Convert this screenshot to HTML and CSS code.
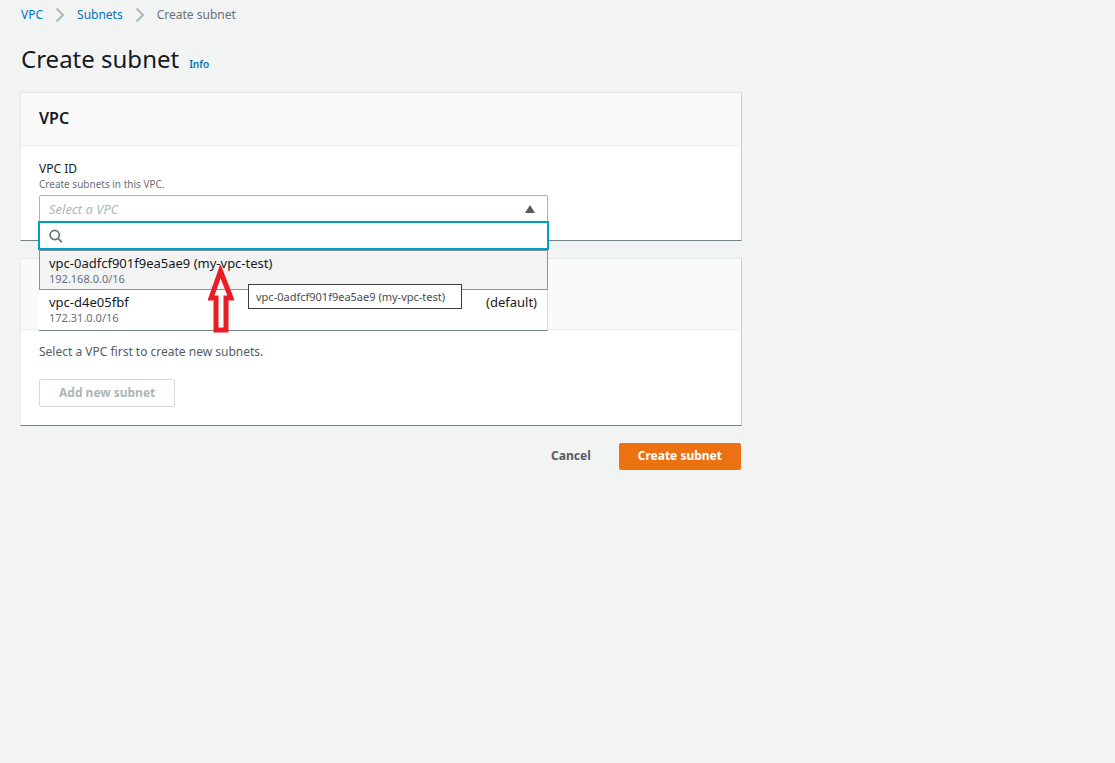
FILE: index.html
```html
<!DOCTYPE html>
<html lang="en">
<head>
<meta charset="utf-8">
<meta name="viewport" content="width=device-width, initial-scale=1">
<title>Create subnet</title>
<link rel="stylesheet" href="styles.css">
</head>
<body>
<div class="page">
  <nav class="breadcrumbs" aria-label="Breadcrumbs">
    <a href="#vpc">VPC</a>
    <svg class="chevron" viewBox="0 0 10 16" aria-hidden="true"><path d="M1.500 1.500 8 8l-6.500 6.500"/></svg>
    <a href="#subnets">Subnets</a>
    <svg class="chevron" viewBox="0 0 10 16" aria-hidden="true"><path d="M1.500 1.500 8 8l-6.500 6.500"/></svg>
    <span>Create subnet</span>
  </nav>

  <header class="title-row">
    <h1 class="title">Create subnet</h1>
    <a class="info" href="#info">Info</a>
  </header>

  <main class="content">
    <section class="card">
      <div class="card-header"><h2 class="card-title">VPC</h2></div>
      <div class="card-body vpc-body">
        <label class="label" for="vpc-id">VPC ID</label>
        <p class="hint">Create subnets in this VPC.</p>
        <div class="picker">
          <select class="select" id="vpc-id">
            <option>Select a VPC</option>
          </select>
          <svg class="caret" viewBox="0 0 10 8" aria-hidden="true"><path d="M5 0 10 8H0z"/></svg>
          <div class="dropdown">
            <div class="search">
              <svg class="search-icon" viewBox="0 0 14 14" aria-hidden="true"><circle cx="5.700" cy="6" r="4.600"/><path d="m9 9.300 3.800 3.800"/></svg>
              <input class="search-input" type="text" aria-label="Search VPCs">
            </div>
            <ul class="options" role="listbox" aria-label="VPCs">
              <li class="option highlighted" role="option" aria-selected="false">
                <div class="option-name">vpc-0adfcf901f9ea5ae9 (my-vpc-test)</div>
                <div class="option-cidr">192.168.0.0/16</div>
              </li>
              <li class="option" role="option" aria-selected="false">
                <div class="option-name"><span>vpc-d4e05fbf</span><span>(default)</span></div>
                <div class="option-cidr">172.31.0.0/16</div>
              </li>
            </ul>
            <div class="tooltip" role="tooltip">vpc-0adfcf901f9ea5ae9 (my-vpc-test)</div>
            <svg class="pointer" viewBox="0 0 26 68" aria-hidden="true"><path d="M12.500 6 3 33h5v32h10V33h5z"/></svg>
          </div>
        </div>
      </div>
    </section>

    <section class="card">
      <div class="card-header settings-header"></div>
      <div class="card-body settings-body">
        <p class="message">Select a VPC first to create new subnets.</p>
        <button class="button outline" type="button" disabled>Add new subnet</button>
      </div>
    </section>

    <div class="actions">
      <button class="button link" type="button">Cancel</button>
      <button class="button primary" type="submit">Create subnet</button>
    </div>
  </main>
</div>
</body>
</html>
```

FILE: styles.css
```css
* {
  box-sizing: border-box;
}

body {
  margin: 0;
  background: #f2f4f3;
  color: #16191f;
  font: 13px/20px "Noto Sans", "Open Sans", sans-serif;
}

h1, h2, p, ul {
  margin: 0;
  padding: 0;
}

a {
  color: #0073bb;
  text-decoration: none;
}

.page {
  max-width: 762px;
  padding: 5px 20px 20px;
}

.breadcrumbs {
  display: flex;
  align-items: center;
  gap: 12px;
  padding-left: 1px;
  font-size: 12px;
  color: #687078;
}

.chevron {
  width: 10px;
  height: 16px;
  fill: none;
  stroke: #aab7b8;
  stroke-width: 2;
}

.title-row {
  display: flex;
  align-items: baseline;
  gap: 10px;
  padding: 18px 0 17px 1px;
}

.title {
  font-size: 24px;
  line-height: 32px;
  font-weight: 400;
}

.info {
  font-size: 10px;
  font-weight: 600;
}

.content {
  display: flex;
  flex-direction: column;
  gap: 17px;
}

.card {
  background: #fff;
  border: 1px solid #e4e8e8;
  border-right-color: #c8cdcd;
  border-bottom-color: #748384;
  border-radius: 1px;
}

.card-header {
  padding: 15px 18px 17px;
  background: #fafafa;
  border-bottom: 1px solid #eaeded;
}

.card-title {
  font-size: 16px;
  line-height: 20px;
  font-weight: 600;
}

.vpc-body {
  padding: 14px 18px 18px;
}

.label {
  display: block;
  font-size: 12px;
  line-height: 18px;
}

.hint {
  font-size: 10px;
  line-height: 12px;
  color: #687078;
}

.picker {
  position: relative;
  width: calc(75% - 4px);
  margin-top: 5px;
}

.select {
  display: block;
  width: 100%;
  height: 27px;
  padding: 0 9px 1px;
  appearance: none;
  background: #fff;
  border: 1px solid #aab7b8;
  border-bottom: 0;
  border-radius: 2px 2px 0 0;
  font: italic 13px/20px "Noto Sans", "Open Sans", sans-serif;
  color: #aab7b8;
}

.caret {
  position: absolute;
  top: 10px;
  right: 13px;
  width: 10px;
  height: 8px;
  fill: #545b64;
}

.dropdown {
  position: absolute;
  z-index: 1;
  top: 100%;
  left: 0;
  right: 0;
}

.search {
  display: flex;
  align-items: center;
  gap: 8px;
  height: 29px;
  margin: -1px -1px 0;
  padding: 0 9px;
  background: #fff;
  border: 2px solid #00a1c9;
}

.search-icon {
  flex: none;
  width: 14px;
  height: 14px;
  fill: none;
  stroke: #687078;
  stroke-width: 1.7;
}

.search-input {
  flex: 1;
  min-width: 0;
  border: 0;
  outline: 0;
  background: transparent;
  font: inherit;
}

.options {
  list-style: none;
  background: #fff;
  border-right: 1px solid #d5dbdb;
  border-bottom: 1px solid #748384;
}

.option {
  height: 40px;
  padding: 3px 10px;
}

.highlighted {
  margin-right: -1px;
  padding: 3px 9px;
  background: #f2f3f3;
  border: 1px solid #879596;
}

.option-name {
  display: flex;
  justify-content: space-between;
  font-size: 13px;
  line-height: 18px;
}

.option-cidr {
  font-size: 11px;
  line-height: 14px;
  color: #687078;
}

.tooltip {
  position: absolute;
  top: 62px;
  left: 209px;
  padding: 2px 16px 2px 7px;
  background: #fff;
  border: 1px solid #3c3c3c;
  font-size: 11px;
  line-height: 19px;
  color: #4c4c4c;
  white-space: nowrap;
}

.pointer {
  position: absolute;
  top: 43px;
  left: 169px;
  width: 26px;
  height: 68px;
  fill: none;
  stroke: #ed1c24;
  stroke-width: 5;
}

.settings-header {
  min-height: 71px;
}

.settings-body {
  padding: 12px 18px 18px;
}

.message {
  margin-bottom: 17px;
  font-size: 12px;
  color: #545b64;
}

.button {
  padding: 3px 18px;
  border: 1px solid transparent;
  border-radius: 2px;
  background: transparent;
  font: 700 12px/20px "Noto Sans", "Open Sans", sans-serif;
  color: #545b64;
}

.outline {
  padding: 3px 19px;
  background: #fff;
  border-color: #d5dbdb;
  color: #aab7b8;
}

.primary {
  background: #ec7211;
  color: #fff;
}

.actions {
  display: flex;
  justify-content: flex-end;
  gap: 9px;
  padding-right: 1px;
}

.actions .button {
  padding-top: 2px;
}
```
